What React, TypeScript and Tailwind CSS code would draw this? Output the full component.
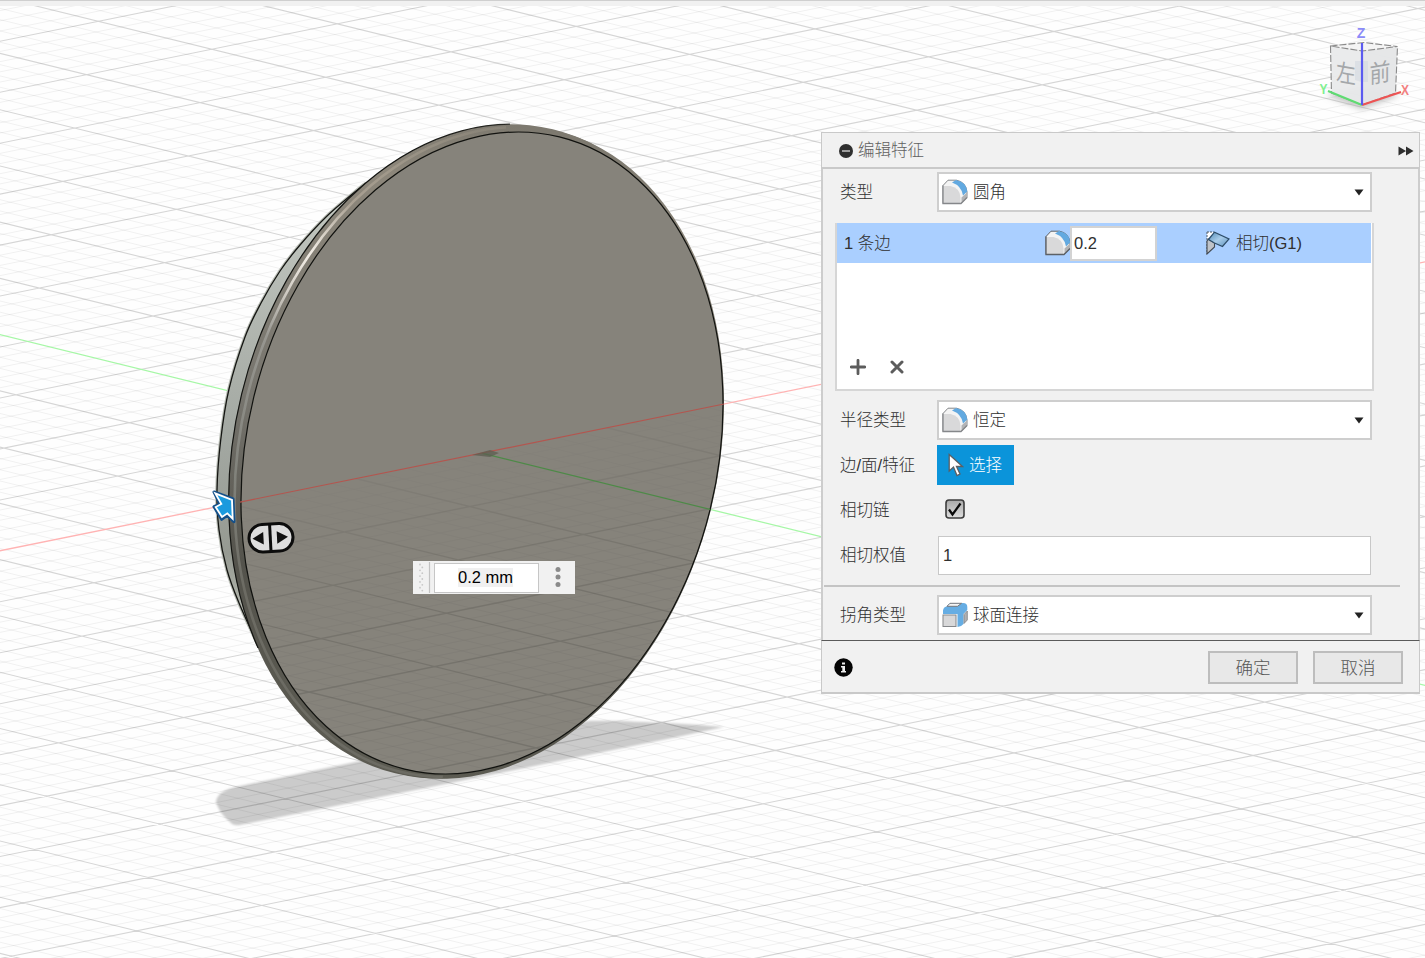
import React from "react";

const ORIGIN = { x: 481.7, y: 453.2 };
const AXIS_A = { x: 113.55, y: 27.94 };
const AXIS_B = { x: 125.35, y: -25.41 };

function gridPath(major: boolean) {
  const parts: string[] = [];
  const span = 20;
  for (let n = -span * 5; n <= span * 5; n++) {
    if ((n % 5 === 0) !== major) continue;
    if (n === 0) continue;
    const k = n / 5;
    const seg = (u: { x: number; y: number }, v: { x: number; y: number }) => {
      const cx = ORIGIN.x + u.x * k;
      const cy = ORIGIN.y + u.y * k;
      parts.push(
        `M${(cx - v.x * span).toFixed(1)} ${(cy - v.y * span).toFixed(1)}L${(cx + v.x * span).toFixed(1)} ${(cy + v.y * span).toFixed(1)}`
      );
    };
    seg(AXIS_A, AXIS_B);
    seg(AXIS_B, AXIS_A);
  }
  return parts.join("");
}

function smooth(points: number[][]) {
  let d = `M${points[0][0]} ${points[0][1]}`;
  for (let i = 0; i < points.length - 1; i++) {
    const p0 = points[Math.max(0, i - 1)];
    const p1 = points[i];
    const p2 = points[i + 1];
    const p3 = points[Math.min(points.length - 1, i + 2)];
    d += `C${p1[0] + (p2[0] - p0[0]) / 6} ${p1[1] + (p2[1] - p0[1]) / 6} ${p2[0] - (p3[0] - p1[0]) / 6} ${p2[1] - (p3[1] - p1[1]) / 6} ${p2[0]} ${p2[1]}`;
  }
  return d;
}

const minorGrid = gridPath(false);
const majorGrid = gridPath(true);
const backEdge = smooth([
  [366, 183],
  [353.3, 193.3],
  [326, 217],
  [300, 245],
  [280, 271],
  [261, 303],
  [245, 337],
  [229, 389],
  [220.7, 440],
  [217, 490],
  [219, 530],
  [227, 570],
  [239, 603],
  [258, 645],
]);

type DiscProps = React.SVGProps<SVGEllipseElement> & { cx: number; cy: number; k: number };

function Disc({ cx, cy, k, ...rest }: DiscProps) {
  return (
    <ellipse
      cx={cx}
      cy={cy}
      rx={235 * k}
      ry={325.4 * k}
      transform={`rotate(13.76 ${cx} ${cy})`}
      {...rest}
    />
  );
}

function Scene() {
  return (
    <svg width="1425" height="958" viewBox="0 0 1425 958" className="block">
      <defs>
        <clipPath id="face">
          <Disc cx={482} cy={453} k={1} />
        </clipPath>
        <linearGradient id="depth" x1="481" y1="453" x2="512" y2="606" gradientUnits="userSpaceOnUse">
          <stop offset="0" stopColor="#fff" stopOpacity="0.3" />
          <stop offset="1" stopColor="#fff" />
        </linearGradient>
        <mask id="below" maskUnits="userSpaceOnUse" x="200" y="380" width="560" height="420">
          <path d="M200 510.3L760 396.8V800H200Z" fill="url(#depth)" />
        </mask>
        <clipPath id="belowClip">
          <path d="M200 510.3L760 396.8V800H200Z" />
        </clipPath>
        <linearGradient id="side" x1="0" y1="185" x2="0" y2="645" gradientUnits="userSpaceOnUse">
          <stop offset="0" stopColor="#c3c8c1" />
          <stop offset="0.55" stopColor="#a3a8a2" />
          <stop offset="0.8" stopColor="#969a92" />
          <stop offset="0.93" stopColor="#b4b7ae" />
          <stop offset="1" stopColor="#8a8b84" />
        </linearGradient>
        <linearGradient id="rim" x1="0" y1="125" x2="0" y2="778" gradientUnits="userSpaceOnUse">
          <stop offset="0" stopColor="#7d796f" />
          <stop offset="0.12" stopColor="#8d877b" />
          <stop offset="0.5" stopColor="#77756e" />
          <stop offset="0.75" stopColor="#54534c" />
          <stop offset="1" stopColor="#5c5b52" />
        </linearGradient>
        <linearGradient id="gleam" x1="0" y1="140" x2="0" y2="640" gradientUnits="userSpaceOnUse">
          <stop offset="0" stopColor="#a59c8d" stopOpacity="0.3" />
          <stop offset="0.2" stopColor="#a9a092" />
          <stop offset="0.32" stopColor="#f3eee6" />
          <stop offset="0.4" stopColor="#d2cdc5" />
          <stop offset="0.5" stopColor="#979690" />
          <stop offset="0.8" stopColor="#80817a" />
          <stop offset="1" stopColor="#6c6b63" />
        </linearGradient>
        <linearGradient id="rimLine" x1="340" y1="0" x2="510" y2="0" gradientUnits="userSpaceOnUse">
          <stop offset="0" stopColor="#141512" />
          <stop offset="0.6" stopColor="#2c2c27" />
          <stop offset="1" stopColor="#77746a" />
        </linearGradient>
        <filter id="soft" x="-5%" y="-5%" width="110%" height="110%">
          <feGaussianBlur stdDeviation="1.2" />
        </filter>
        <clipPath id="leftRim">
          <path d="M200 100H508L482 453L440 800H200Z" />
        </clipPath>
        <clipPath id="upperRim">
          <path d="M200 100H510V453L400 648H200Z" />
        </clipPath>
      </defs>
      <rect width="1425" height="958" fill="#fefefe" />
      <path
        d="M216 802C217 793 226 789 240 786L360 761L480 740L589 721C615 720 690 724 724 727L682 736L510 771L451 783L240 825Q233 826 230 822Q219 813 216 802Z"
        fill="#cbcbcb"
        filter="url(#soft)"
      />
      <path d={minorGrid} stroke="#000" strokeOpacity="0.055" fill="none" />
      <path d={majorGrid} stroke="#000" strokeOpacity="0.16" strokeWidth="1.1" fill="none" />
      <path d="M-10 552.8L1435 259.9" stroke="#ffb3b3" strokeWidth="1.3" />
      <path d="M-10 332.2L1435 687.8" stroke="#a6f7a6" strokeWidth="1.3" />

      <path d={backEdge} fill="none" stroke="#b9bdb5" strokeWidth="3.5" />
      <path d={backEdge + "L420 560L420 200Z"} fill="url(#side)" />
      <path d={backEdge} fill="none" stroke="#141512" strokeWidth="1.3" />
      <Disc cx={479} cy={452.5} k={1.0165} fill="url(#rim)" />
      <Disc cx={474} cy={451.3} k={1.019} fill="url(#rim)" />
      <g clipPath="url(#upperRim)">
        <Disc cx={474} cy={451} k={1.018} fill="none" stroke="url(#rimLine)" strokeWidth="1.2" />
      </g>
      <g clipPath="url(#leftRim)">
        <Disc cx={478.5} cy={452} k={1.012} fill="none" stroke="url(#gleam)" strokeWidth="2.6" />
      </g>
      <Disc cx={482} cy={453} k={1} fill="#86837b" stroke="#11120f" strokeWidth="1.2" />
      <g clipPath="url(#face)">
        <g mask="url(#below)">
          <path d={minorGrid} stroke="#000" strokeOpacity="0.035" fill="none" />
          <path d={majorGrid} stroke="#000" strokeOpacity="0.12" strokeWidth="1.4" fill="none" />
        </g>
        <path d="M481.7 453.2L800 531.5" stroke="#4d8a47" strokeWidth="1.2" clipPath="url(#belowClip)" />
      </g>
      <path d="M240 502.1L724 404" stroke="#b3564f" strokeWidth="1.2" />
      <path d="M472 455L490 450L499 453L490 457Z" fill="#5c5e50" fillOpacity="0.75" />

      <g transform="translate(200 440) scale(0.33333)">
        <path
          d="M42 156L99 177L102 245L82 226L65 238L42 200L60 192Z"
          fill="#1593d6"
          stroke="#14508a"
          strokeWidth="9"
          strokeLinejoin="round"
        />
        <path
          d="M46 160L96 180L98 236L82 220L66 231L47 201L64 192Z"
          fill="#1b9ade"
          stroke="#fff"
          strokeWidth="5.5"
        />
      </g>
      <g transform="rotate(-3 271 538)">
        <rect x="249" y="524" width="44" height="27.500" rx="13.700" fill="#dedede" stroke="#0c0c0c" strokeWidth="3" />
        <path d="M270.300 524V551" stroke="#0c0c0c" strokeWidth="3" />
        <path d="M263.500 531.500V544L252.500 537.700ZM277 531.500V544L288 537.700Z" fill="#111" />
      </g>
    </svg>
  );
}

function ViewCube() {
  return (
    <svg width="105" height="100" viewBox="1315 20 105 100">
      <defs>
        <filter id="cubeShadow" x="-20%" y="-50%" width="140%" height="200%">
          <feGaussianBlur stdDeviation="3" />
        </filter>
      </defs>
      <path d="M1326 95L1362 109L1400 95L1362 86Z" fill="#999" fillOpacity="0.6" filter="url(#cubeShadow)" />
      <path d="M1330.5 46L1362 51L1397.500 46.500L1395.500 93L1362 105L1331.500 93Z" fill="#e9eaeb" fillOpacity="0.94" />
      <path d="M1330.500 46L1364 42.500L1397.500 46.500L1362 51Z" fill="#f4f4f4" />
      <path d="M1362 51L1397.500 46.500L1395.500 93L1362 105Z" fill="#e3e4e6" fillOpacity="0.6" />
      <path d="M1355 80V61H1368V82H1362Z" fill="#cdd3de" fillOpacity="0.45" />
      <path
        d="M1330.500 46L1364 42.500L1397.500 46.500L1362 51L1330.500 46L1331.500 93L1362 105L1395.500 93L1397.500 46.500"
        fill="none"
        stroke="#8a8a8a"
        strokeWidth="1.1"
        strokeDasharray="7 2"
      />
      <g fontFamily="'Noto Sans CJK SC', sans-serif" fontWeight="400" fontSize="22" fill="#a4a7aa">
        <text transform="matrix(0.9 0.16 0 1.1 1336 80.500)">左</text>
        <text transform="matrix(0.95 -0.16 0 1.12 1369.500 83.500)">前</text>
      </g>
      <path d="M1362 105L1328 91" stroke="#5fdc72" strokeWidth="2" />
      <path d="M1362 105L1401 92" stroke="#ee5353" strokeWidth="2" />
      <path d="M1362 43V105" stroke="#5b5bf0" strokeWidth="2.2" />
      <g fontFamily="'Liberation Sans', sans-serif" fontWeight="700" textAnchor="middle">
        <text x="1361" y="38" fontSize="14" fill="#8b8bf8">Z</text>
        <text x="1405" y="95" fontSize="14" textLength="8" lengthAdjust="spacingAndGlyphs" fill="#f28080">X</text>
        <text x="1323.500" y="93.500" fontSize="14" textLength="8" lengthAdjust="spacingAndGlyphs" fill="#7ff090">Y</text>
      </g>
    </svg>
  );
}

function FilletIcon({ dark = false }: { dark?: boolean }) {
  const line = dark ? "#5d6166" : "#85878a";
  return (
    <svg width="26" height="26" viewBox="0 0 26 26" className="shrink-0">
      <path d="M1 6.500L6 1.200H14.500Q24 3 25 13V18.500L19 24.500H1Z" fill="#f4f4f4" stroke={line} strokeWidth="1" />
      <path d="M10 3.600L14 1Q24.500 3 25.300 12.500L21 16.500Q19.500 7 10 3.600Z" fill="#62a9e0" />
      <path d="M1 24.500V7H8.500Q18 9 18.500 18.500V24.500Z" fill="#d9d9da" />
      <path d="M19.500 24V18.500L25 13.500V18.500Z" fill="#b2b3b5" />
      <path d="M1 6.500V24.500H19L25 18.500" fill="none" stroke={line} strokeWidth="1.3" />
    </svg>
  );
}

function CornerIcon() {
  return (
    <svg width="26" height="26" viewBox="0 0 26 26" className="shrink-0">
      <path d="M1 12V8.500Q1.500 5 4.500 4.500L8 1H21Q25.300 1 25.300 5V8L21.500 12V22Q19 25 15.500 25V12Z" fill="#66ade3" />
      <path d="M5 4.300L8 1.300H19.500L15.500 4.300Z" fill="#f4f4f4" stroke="#77797c" />
      <path d="M22 12.500L25.300 9V18L22 21.500Z" fill="#b0b1b3" stroke="#808285" strokeWidth="0.8" />
      <rect x="0.500" y="12" width="14.500" height="13" fill="#fff" />
      <rect x="1" y="13" width="13" height="11.500" fill="#d8d8d9" stroke="#85878a" />
    </svg>
  );
}

function TangentIcon() {
  return (
    <svg width="24" height="24" viewBox="0 0 24 24" className="shrink-0">
      <defs>
        <linearGradient id="tg" x1="0" y1="0" x2="1" y2="1">
          <stop offset="0" stopColor="#4f88b4" />
          <stop offset="0.5" stopColor="#a9cdea" />
          <stop offset="1" stopColor="#5d91bb" />
        </linearGradient>
      </defs>
      <path d="M1 1H8L1 9Z" fill="#fff" />
      <path d="M1 1H8M1 1V23" stroke="#4e5a66" strokeWidth="1" strokeDasharray="2 1" />
      <path d="M1 10L2.500 8L8.500 12V16L1 23Z" fill="#bfc3c8" stroke="#434a52" strokeWidth="1.1" />
      <path d="M2.500 8.500L8.500 1.200L23 8L16.500 15.500L8.500 12Z" fill="url(#tg)" stroke="#2e4d68" strokeWidth="1.2" />
    </svg>
  );
}

function Select({ icon, label }: { icon: React.ReactNode; label: string }) {
  return (
    <div className="flex h-10 w-[435px] items-center border-2 border-[#cecece] bg-white pr-[6px] pl-[3px]">
      {icon}
      <span className="ml-[5px] flex-1 pb-px">{label}</span>
      <svg width="10" height="7" viewBox="0 0 10 7">
        <path d="M0.500 0.500H9.500L5 6.500Z" fill="#222" />
      </svg>
    </div>
  );
}

function Row({ label, className, children }: { label: string; className: string; children: React.ReactNode }) {
  return (
    <div className={"flex items-center " + className}>
      <span className="w-[97px] shrink-0 pb-px">{label}</span>
      {children}
    </div>
  );
}

function Panel() {
  return (
    <section className="flex h-[562px] w-[599px] flex-col text-[16.5px] leading-[20px] font-light text-[#303030]">
      <header className="flex h-[37px] shrink-0 items-center border border-b-2 border-[#c9c9c9] bg-[#f1f1f1] pr-[5px] pl-[16px] text-[#606060]">
        <svg width="16" height="16" viewBox="0 0 16 16" className="mt-[1px]">
          <circle cx="8" cy="8" r="7" fill="#2f2f2f" />
          <path d="M4 8H12" stroke="#bbb" strokeWidth="1.6" />
        </svg>
        <span className="ml-[4px] flex-1">编辑特征</span>
        <svg width="16" height="10" viewBox="0 0 16 10" className="mt-[2px]">
          <path d="M0.500 0.500L8 5L0.500 9.500ZM8 0.500L15.500 5L8 9.500Z" fill="#2e2e2e" />
        </svg>
      </header>
      <div className="flex h-[471px] shrink-0 flex-col border-x-2 border-[#cdcdcd] bg-[#f1f1f1] pt-[3px]">
        <Row label="类型" className="h-10 pl-[17px]">
          <Select icon={<FilletIcon />} label="圆角" />
        </Row>
        <div className="mt-[11px] ml-[12px] flex h-[168px] w-[539px] shrink-0 flex-col border-2 border-t-0 border-[#d6d6d6] bg-white">
          <div className="flex h-10 w-[534px] items-center bg-[#aacfff] pl-[7px]">
            <span className="w-[201px] pb-px">1 条边</span>
            <FilletIcon dark />
            <span className="-ml-px flex h-[35px] w-[87px] items-center border-2 border-[#d3d3d3] bg-white pl-[2px]">0.2</span>
            <span className="ml-[49px] flex items-center gap-[6px]">
              <TangentIcon />
              <span className="pb-px">相切(G1)</span>
            </span>
          </div>
          <div className="mt-auto mb-[14px] flex items-center gap-[24px] pl-[13px]">
            <svg width="16" height="16" viewBox="0 0 16 16">
              <path d="M8 1.300V14.700M1.300 8H14.700" stroke="#5c5c5c" strokeWidth="2.800" strokeLinecap="round" />
            </svg>
            <svg width="14" height="14" viewBox="0 0 14 14">
              <path d="M2 2L12 12M12 2L2 12" stroke="#5c5c5c" strokeWidth="3" strokeLinecap="round" />
            </svg>
          </div>
        </div>
        <Row label="半径类型" className="mt-[9px] h-10 pl-[17px]">
          <Select icon={<FilletIcon />} label="恒定" />
        </Row>
        <Row label="边/面/特征" className="mt-[5px] h-10 pl-[17px]">
          <button className="flex h-10 w-[77px] items-center bg-[#0b94da] pl-[11px] text-white">
            <svg width="16" height="24" viewBox="0 0 16 24">
              <path d="M1.200 1.500V18L5.500 14L9 22.500L12 21L8.500 13.500H14.500Z" fill="#fff" stroke="#5b5f63" strokeWidth="1.300" />
            </svg>
            <span className="ml-[5px] pb-px">选择</span>
          </button>
        </Row>
        <Row label="相切链" className="mt-[5px] h-10 pl-[17px]">
          <svg width="20" height="20" viewBox="0 0 20 20" className="mb-[2px] ml-[8px]">
            <defs>
              <linearGradient id="cb" x1="0" y1="0" x2="0" y2="1">
                <stop offset="0" stopColor="#a9a9a9" />
                <stop offset="1" stopColor="#dedede" />
              </linearGradient>
            </defs>
            <rect x="1" y="1" width="18" height="18" rx="3" fill="url(#cb)" stroke="#3c3c3c" strokeWidth="1.600" />
            <path d="M4 10.500L7.500 15.500L15.500 4.500" fill="none" stroke="#0a0a0a" strokeWidth="2.200" />
          </svg>
        </Row>
        <Row label="相切权值" className="mt-[5px] h-10 pl-[17px]">
          <span className="ml-[1px] flex h-[39px] w-[433px] items-center border border-[#c8c8c8] bg-white pl-[4px]">1</span>
        </Row>
        <div className="mt-[10px] ml-[1px] h-[2px] w-[576px] shrink-0 bg-[#c4c4c4]" />
        <Row label="拐角类型" className="mt-[8px] h-10 pl-[17px]">
          <Select icon={<CornerIcon />} label="球面连接" />
        </Row>
      </div>
      <footer className="flex flex-1 items-center border border-t-[1.500px] border-b-2 border-[#c9c9c9] border-t-[#5a5a5a] bg-[#f1f1f1] pt-[2px] pr-[16px] pl-[12px]">
        <svg width="20" height="20" viewBox="0 0 20 20">
          <circle cx="9.500" cy="9.500" r="9.200" fill="#050505" />
          <path d="M8 4.500H11V6.500H8ZM7 8H11V13H12V14.500H7V13H8.300V9.500H7Z" fill="#eee" />
        </svg>
        <div className="ml-auto flex gap-[15px] text-[17.500px] text-[#565656]">
          <button className="h-[33px] w-[90px] border-2 border-[#bdbdbd] bg-[#e8e8e8]">确定</button>
          <button className="h-[33px] w-[90px] border-2 border-[#bdbdbd] bg-[#e8e8e8]">取消</button>
        </div>
      </footer>
    </section>
  );
}

function ValueBox() {
  const dots = Array.from({ length: 10 }, (_, n) => n);
  return (
    <div className="flex h-[33px] w-[162px] items-center bg-[#f1f1f1] text-[16.5px] text-black">
      <svg width="18" height="33" viewBox="0 0 18 33">
        {dots.map((n) => (
          <circle key={n} cx={n % 2 ? 9.300 : 7} cy={3.500 + n * 2.900} r="0.900" fill="#c8c8c8" />
        ))}
        <path d="M16.500 1V32" stroke="#c2c2c2" strokeWidth="1.200" />
      </svg>
      <div className="ml-[3px] flex h-[30px] w-[105px] items-center justify-center border border-[#c6c6c6] bg-white pr-[2px]">
        <span className="bg-[#f0f0f0] leading-[19px]">0.2 mm</span>
      </div>
      <svg width="6" height="22" viewBox="0 0 6 22" className="mb-px ml-[16px]">
        <circle cx="3" cy="3.500" r="2.500" fill="#8a8a8a" />
        <circle cx="3" cy="11" r="2.500" fill="#8a8a8a" />
        <circle cx="3" cy="18.500" r="2.500" fill="#8a8a8a" />
      </svg>
    </div>
  );
}

export default function App() {
  return (
    <main className="relative h-[958px] w-[1425px] overflow-hidden bg-white font-['Liberation_Sans','Noto_Sans_CJK_SC',sans-serif]">
      <Scene />
      <div className="absolute top-0 left-0 h-[6px] w-full border-t border-[#cfcfcf] bg-[#f1f1f1]" />
      <div className="absolute top-[20px] left-[1315px]">
        <ViewCube />
      </div>
      <div className="absolute top-[561px] left-[413px]">
        <ValueBox />
      </div>
      <div className="absolute top-[132px] left-[821px]">
        <Panel />
      </div>
    </main>
  );
}
